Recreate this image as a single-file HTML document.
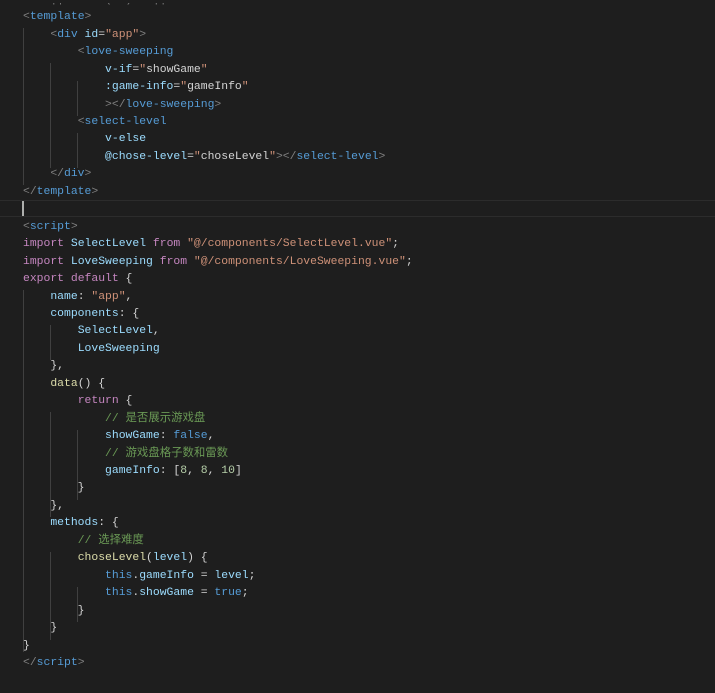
<!DOCTYPE html>
<html><head><meta charset="utf-8"><style>
html{overflow:hidden}
body{margin:0;width:715px;height:693px;background:#1e1e1e;overflow:hidden;position:relative;font-family:"Liberation Mono","Noto Sans CJK SC",monospace;font-size:11.4px;}
#w{position:absolute;left:0;top:3px;width:715px;height:690px;overflow:hidden}
.l{position:absolute;left:23px;height:17.45px;line-height:17.45px;white-space:pre;color:#d4d4d4;}
.g{color:#808080}.t{color:#569cd6}.a{color:#9cdcfe}.s{color:#ce9178}.k{color:#c586c0}
.f{color:#dcdcaa}.c{color:#6a9955}.n{color:#b5cea8}.b{color:#569cd6}
.ig{position:absolute;width:1px;background:#404040}
.cur{position:absolute;left:0;width:715px;top:200px;height:15px;border-top:1px solid #2c2c2c;border-bottom:1px solid #2c2c2c}
</style></head><body>
<div class="cur"></div>
<div style="position:absolute;left:22px;top:201px;width:2px;height:15px;background:#aeafad"></div>
<div id="w">
<div class="ig" style="left:23px;top:25px;height:157px"></div>
<div class="ig" style="left:50px;top:60px;height:105px"></div>
<div class="ig" style="left:77px;top:78px;height:35px"></div>
<div class="ig" style="left:77px;top:130px;height:35px"></div>
<div class="ig" style="left:23px;top:287px;height:362px"></div>
<div class="ig" style="left:50px;top:322px;height:35px"></div>
<div class="ig" style="left:50px;top:409px;height:105px"></div>
<div class="ig" style="left:77px;top:427px;height:70px"></div>
<div class="ig" style="left:50px;top:549px;height:88px"></div>
<div class="ig" style="left:77px;top:584px;height:35px"></div>
<div class="l" style="top:-11.2px"><span class="g">    ||      (  )   ||</span></div>
<div class="l" style="top:6.3px"><span class="g">&lt;</span><span class="t">template</span><span class="g">&gt;</span></div>
<div class="l" style="top:23.7px">    <span class="g">&lt;</span><span class="t">div</span> <span class="a">id</span>=<span class="s">"app"</span><span class="g">&gt;</span></div>
<div class="l" style="top:41.2px">        <span class="g">&lt;</span><span class="t">love-sweeping</span></div>
<div class="l" style="top:58.6px">            <span class="a">v-if</span>=<span class="s">"</span>showGame<span class="s">"</span></div>
<div class="l" style="top:76.1px">            <span class="a">:game-info</span>=<span class="s">"</span>gameInfo<span class="s">"</span></div>
<div class="l" style="top:93.5px">            <span class="g">&gt;&lt;/</span><span class="t">love-sweeping</span><span class="g">&gt;</span></div>
<div class="l" style="top:111px">        <span class="g">&lt;</span><span class="t">select-level</span></div>
<div class="l" style="top:128.4px">            <span class="a">v-else</span></div>
<div class="l" style="top:145.9px">            <span class="a">@chose-level</span>=<span class="s">"</span>choseLevel<span class="s">"</span><span class="g">&gt;&lt;/</span><span class="t">select-level</span><span class="g">&gt;</span></div>
<div class="l" style="top:163.3px">    <span class="g">&lt;/</span><span class="t">div</span><span class="g">&gt;</span></div>
<div class="l" style="top:180.8px"><span class="g">&lt;/</span><span class="t">template</span><span class="g">&gt;</span></div>
<div class="l" style="top:215.7px"><span class="g">&lt;</span><span class="t">script</span><span class="g">&gt;</span></div>
<div class="l" style="top:233.1px"><span class="k">import</span> <span class="a">SelectLevel</span> <span class="k">from</span> <span class="s">"@/components/SelectLevel.vue"</span>;</div>
<div class="l" style="top:250.6px"><span class="k">import</span> <span class="a">LoveSweeping</span> <span class="k">from</span> <span class="s">"@/components/LoveSweeping.vue"</span>;</div>
<div class="l" style="top:268px"><span class="k">export</span> <span class="k">default</span> {</div>
<div class="l" style="top:285.5px">    <span class="a">name</span>: <span class="s">"app"</span>,</div>
<div class="l" style="top:302.9px">    <span class="a">components</span>: {</div>
<div class="l" style="top:320.4px">        <span class="a">SelectLevel</span>,</div>
<div class="l" style="top:337.8px">        <span class="a">LoveSweeping</span></div>
<div class="l" style="top:355.3px">    },</div>
<div class="l" style="top:372.7px">    <span class="f">data</span>() {</div>
<div class="l" style="top:390.2px">        <span class="k">return</span> {</div>
<div class="l" style="top:407.6px">            <span class="c">// 是否展示游戏盘</span></div>
<div class="l" style="top:425.1px">            <span class="a">showGame</span>: <span class="b">false</span>,</div>
<div class="l" style="top:442.5px">            <span class="c">// 游戏盘格子数和雷数</span></div>
<div class="l" style="top:460px">            <span class="a">gameInfo</span>: [<span class="n">8</span>, <span class="n">8</span>, <span class="n">10</span>]</div>
<div class="l" style="top:477.4px">        }</div>
<div class="l" style="top:494.9px">    },</div>
<div class="l" style="top:512.3px">    <span class="a">methods</span>: {</div>
<div class="l" style="top:529.8px">        <span class="c">// 选择难度</span></div>
<div class="l" style="top:547.2px">        <span class="f">choseLevel</span>(<span class="a">level</span>) {</div>
<div class="l" style="top:564.7px">            <span class="b">this</span>.<span class="a">gameInfo</span> = <span class="a">level</span>;</div>
<div class="l" style="top:582.1px">            <span class="b">this</span>.<span class="a">showGame</span> = <span class="b">true</span>;</div>
<div class="l" style="top:599.6px">        }</div>
<div class="l" style="top:617px">    }</div>
<div class="l" style="top:634.5px">}</div>
<div class="l" style="top:651.9px"><span class="g">&lt;/</span><span class="t">script</span><span class="g">&gt;</span></div>
</div>
</body></html>
